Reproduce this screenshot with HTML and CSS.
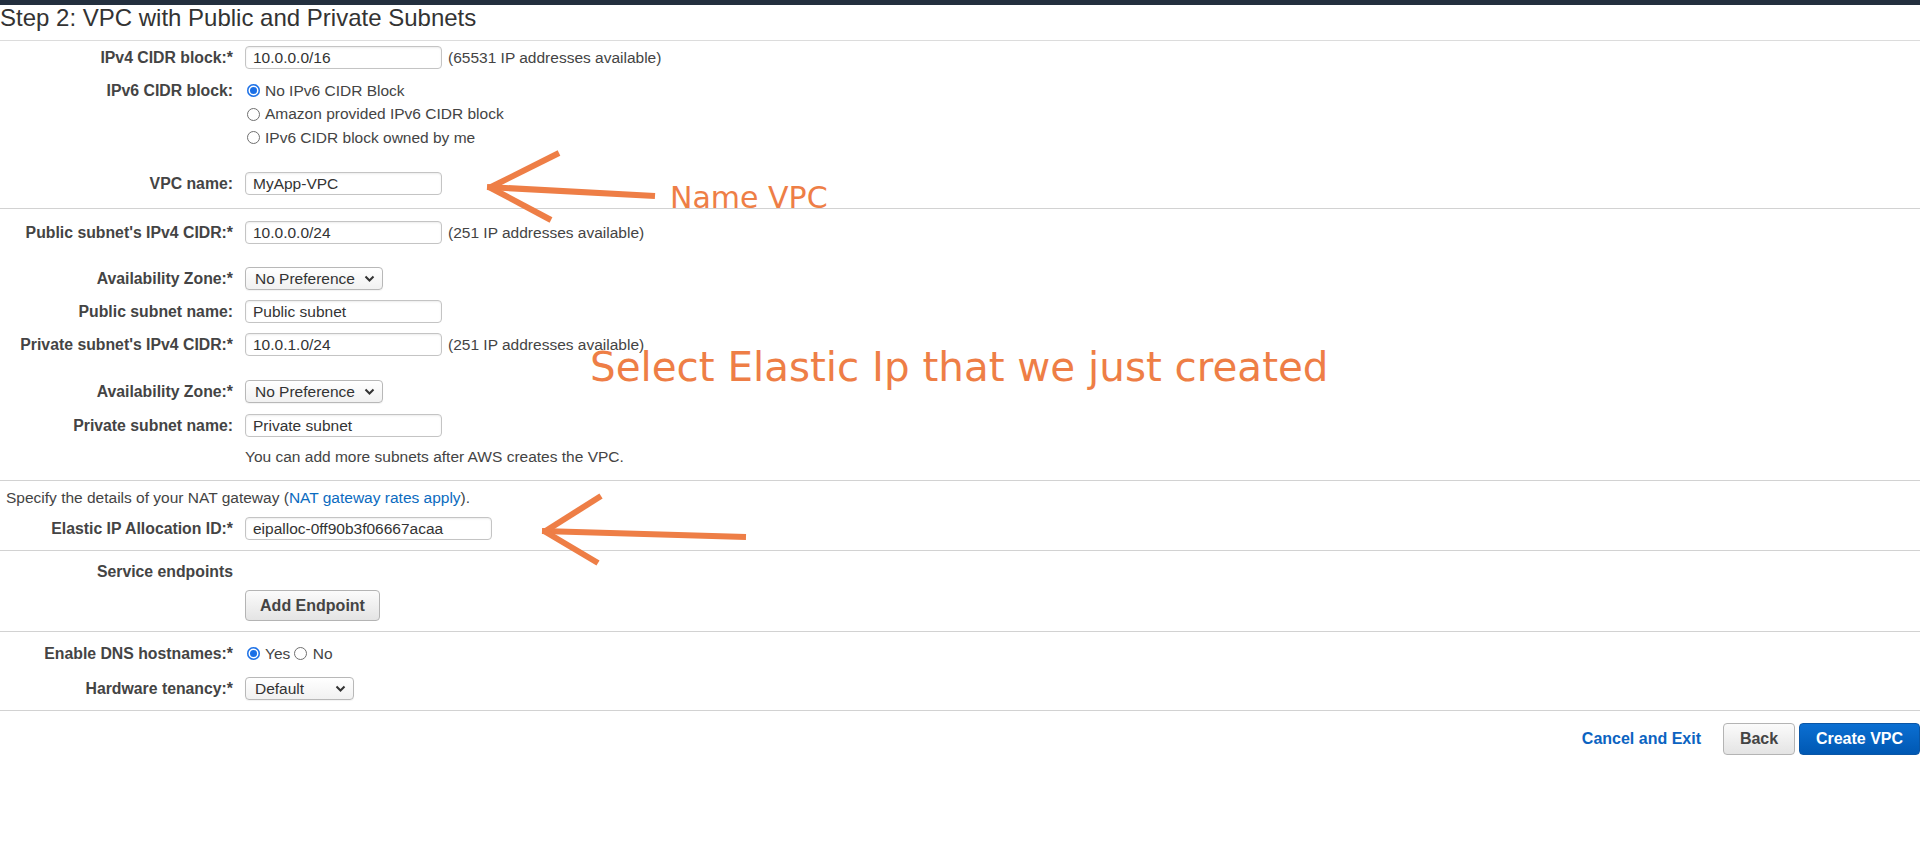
FILE: index.html
```html
<!DOCTYPE html>
<html>
<head>
<meta charset="utf-8">
<title>Step 2: VPC with Public and Private Subnets</title>
<link rel="stylesheet" href="styles.css">
</head>
<body>
<div class="topbar"></div>
<h1 class="title">Step 2: VPC with Public and Private Subnets</h1>

<div class="section s1">
  <div class="row">
    <div class="lbl">IPv4 CIDR block:*</div>
    <div class="ctl"><input class="txt" value="10.0.0.0/16"><span class="hint">(65531 IP addresses available)</span></div>
  </div>
  <div class="row top mt-ipv6">
    <div class="lbl lbl-line">IPv6 CIDR block:</div>
    <div class="ctl col">
      <div class="rline"><span class="rb on"></span><span class="rtext">No IPv6 CIDR Block</span></div>
      <div class="rline"><span class="rb"></span><span class="rtext">Amazon provided IPv6 CIDR block</span></div>
      <div class="rline"><span class="rb"></span><span class="rtext">IPv6 CIDR block owned by me</span></div>
    </div>
  </div>
  <div class="row mt-vpcname">
    <div class="lbl">VPC name:</div>
    <div class="ctl"><input class="txt" value="MyApp-VPC"></div>
  </div>
</div>

<div class="section s2">
  <div class="row">
    <div class="lbl">Public subnet's IPv4 CIDR:*</div>
    <div class="ctl"><input class="txt" value="10.0.0.0/24"><span class="hint">(251 IP addresses available)</span></div>
  </div>
  <div class="row mt-23">
    <div class="lbl">Availability Zone:*</div>
    <div class="ctl"><div class="sel sel-az"><span>No Preference</span><svg class="chev" width="11" height="8" viewBox="0 0 11 8"><path d="M1.5 1.5 L5.5 5.5 L9.5 1.5" fill="none" stroke="#333" stroke-width="2"/></svg></div></div>
  </div>
  <div class="row mt-10">
    <div class="lbl">Public subnet name:</div>
    <div class="ctl"><input class="txt" value="Public subnet"></div>
  </div>
  <div class="row mt-10">
    <div class="lbl">Private subnet's IPv4 CIDR:*</div>
    <div class="ctl"><input class="txt" value="10.0.1.0/24"><span class="hint">(251 IP addresses available)</span></div>
  </div>
  <div class="row mt-24">
    <div class="lbl">Availability Zone:*</div>
    <div class="ctl"><div class="sel sel-az"><span>No Preference</span><svg class="chev" width="11" height="8" viewBox="0 0 11 8"><path d="M1.5 1.5 L5.5 5.5 L9.5 1.5" fill="none" stroke="#333" stroke-width="2"/></svg></div></div>
  </div>
  <div class="row mt-11">
    <div class="lbl">Private subnet name:</div>
    <div class="ctl"><input class="txt" value="Private subnet"></div>
  </div>
  <div class="row mt-10 note-row">
    <div class="lbl"></div>
    <div class="ctl note">You can add more subnets after AWS creates the VPC.</div>
  </div>
</div>

<div class="section s3">
  <div class="specify">Specify the details of your NAT gateway (<a class="link" href="#">NAT gateway rates apply</a>).</div>
  <div class="row mt-9">
    <div class="lbl">Elastic IP Allocation ID:*</div>
    <div class="ctl"><input class="txt txt-eip" value="eipalloc-0ff90b3f06667acaa"></div>
  </div>
</div>

<div class="section s4">
  <div class="row line20">
    <div class="lbl">Service endpoints</div>
  </div>
  <div class="row mt-8">
    <div class="lbl"></div>
    <div class="ctl"><button class="btn btn-add">Add Endpoint</button></div>
  </div>
</div>

<div class="section s5">
  <div class="row">
    <div class="lbl">Enable DNS hostnames:*</div>
    <div class="ctl"><span class="rb on"></span><span class="rtext">Yes</span><span class="rb rb-no"></span><span class="rtext">No</span></div>
  </div>
  <div class="row mt-12">
    <div class="lbl">Hardware tenancy:*</div>
    <div class="ctl"><div class="sel sel-hw"><span>Default</span><svg class="chev" width="11" height="8" viewBox="0 0 11 8"><path d="M1.5 1.5 L5.5 5.5 L9.5 1.5" fill="none" stroke="#333" stroke-width="2"/></svg></div></div>
  </div>
</div>

<div class="footer">
  <a class="cancel" href="#">Cancel and Exit</a>
  <button class="btn btn-back">Back</button>
  <button class="btn btn-primary">Create VPC</button>
</div>

<svg class="overlay" width="1920" height="852" viewBox="0 0 1920 852">
  <g stroke="#ee7e46" stroke-width="6" fill="none" stroke-linecap="butt">
    <line x1="487" y1="187" x2="655" y2="196"/>
    <line x1="489" y1="188" x2="559" y2="153"/>
    <line x1="489" y1="187" x2="551" y2="220"/>
    <line x1="542" y1="531" x2="746" y2="537"/>
    <line x1="544" y1="532" x2="601" y2="496"/>
    <line x1="544" y1="531" x2="598" y2="563"/>
  </g>
</svg>
<div class="anno anno-name">Name VPC</div>
<div class="anno anno-eip">Select Elastic Ip that we just created</div>
</body>
</html>
```

FILE: styles.css
```css
* { box-sizing: border-box; }
html, body { margin: 0; padding: 0; background: #fff; }
body {
  width: 1920px;
  height: 852px;
  overflow: hidden;
  position: relative;
  font-family: "Liberation Sans", Arial, sans-serif;
  color: #444;
}
.topbar { height: 5px; background: #232f3e; }
.title {
  margin: 0;
  font-size: 24px;
  font-weight: normal;
  line-height: 24px;
  color: #333;
  padding: 1px 0 10px 0;
  border-bottom: 1px solid #dcdcdc;
}
.section { border-bottom: 1px solid #d2d2d2; }
.s1 { padding: 5px 0 13px; }
.s2 { padding: 12px 0 13px; }
.s3 { padding: 7px 0 10px; }
.s4 { padding: 11px 0 10px; }
.s5 { padding: 10px 0 10px; }

.row { display: flex; align-items: center; min-height: 23px; }
.row.top { align-items: flex-start; }
.line20 { min-height: 20px; }
.mt-ipv6 { margin-top: 10px; }
.mt-vpcname { margin-top: 22.5px; }
.mt-8 { margin-top: 8px; }
.mt-9 { margin-top: 9px; }
.mt-10 { margin-top: 10px; }
.mt-11 { margin-top: 11px; }
.mt-12 { margin-top: 12px; }
.mt-23 { margin-top: 23px; }
.mt-24 { margin-top: 24px; }

.lbl {
  flex: none;
  width: 233px;
  text-align: right;
  font-weight: bold;
  font-size: 15.8px;
  color: #444;
}
.lbl-line { line-height: 23.5px; }
.ctl { margin-left: 12px; display: flex; align-items: center; font-size: 15.5px; }
.ctl.col { flex-direction: column; align-items: flex-start; }

.txt {
  width: 197px;
  height: 23px;
  border: 1px solid #c4c4c4;
  border-radius: 4px;
  padding: 0 7px;
  font-family: "Liberation Sans", Arial, sans-serif;
  font-size: 15.5px;
  color: #333;
  background: #fff;
  box-shadow: inset 0 1px 2px rgba(0, 0, 0, 0.08);
  outline: none;
}
.txt-eip { width: 247px; }
.hint { margin-left: 6px; color: #444; }

.rline { display: flex; align-items: center; height: 23.5px; }
.rb {
  flex: none;
  display: inline-block;
  width: 13px;
  height: 13px;
  border-radius: 50%;
  border: 1px solid #6f6f6f;
  background: #fff;
  margin-left: 1.5px;
  margin-right: 5.5px;
}
.rb.on {
  border: none;
  background: #1a6fe6;
  box-shadow: inset 0 0 0 1.5px #1a6fe6, inset 0 0 0 3px #fff;
}
.rb-no { margin-left: 4px; }
.rtext { color: #444; }

.sel {
  display: flex;
  align-items: center;
  justify-content: space-between;
  height: 23px;
  border: 1px solid #b8b8b8;
  border-radius: 4px;
  background: linear-gradient(#ffffff, #f1f1f1);
  padding: 0 7px 0 9px;
  color: #333;
  font-size: 15.5px;
  box-shadow: 0 1px 1px rgba(0, 0, 0, 0.05);
}
.sel-az { width: 138px; }
.sel-hw { width: 109px; }
.chev { flex: none; }

.note { height: 20px; line-height: 20px; }
.note-row { min-height: 20px; }

.specify { padding-left: 6px; font-size: 15.5px; line-height: 20px; color: #444; }
.link { color: #0b6bc0; text-decoration: none; }

.btn {
  height: 31px;
  border: 1px solid #b4b4b4;
  border-radius: 4px;
  background: linear-gradient(#fbfbfb, #e4e4e4);
  font-family: "Liberation Sans", Arial, sans-serif;
  font-weight: bold;
  font-size: 16px;
  color: #444;
  padding: 0 14px;
  cursor: pointer;
}
.btn-add { width: 135px; }

.footer {
  display: flex;
  justify-content: flex-end;
  align-items: center;
  margin-top: 12px;
}
.cancel {
  color: #0b63c1;
  font-weight: bold;
  font-size: 16px;
  text-decoration: none;
  margin-right: 22px;
}
.btn-back { height: 32px; width: 72px; padding: 0; margin-right: 4px; }
.btn-primary {
  height: 32px;
  width: 121px;
  padding: 0;
  color: #fff;
  border: 1px solid #0a56a6;
  background: linear-gradient(#0b6fd2, #0058b3);
}

.overlay { position: absolute; left: 0; top: 0; pointer-events: none; }
.anno {
  position: absolute;
  font-family: "DejaVu Sans", Verdana, sans-serif;
  color: #ee7e46;
  white-space: nowrap;
}
.anno-name { left: 670px; top: 183px; font-size: 30px; line-height: 30px; }
.anno-eip { left: 590px; top: 347px; font-size: 40.4px; line-height: 40px; }
```
